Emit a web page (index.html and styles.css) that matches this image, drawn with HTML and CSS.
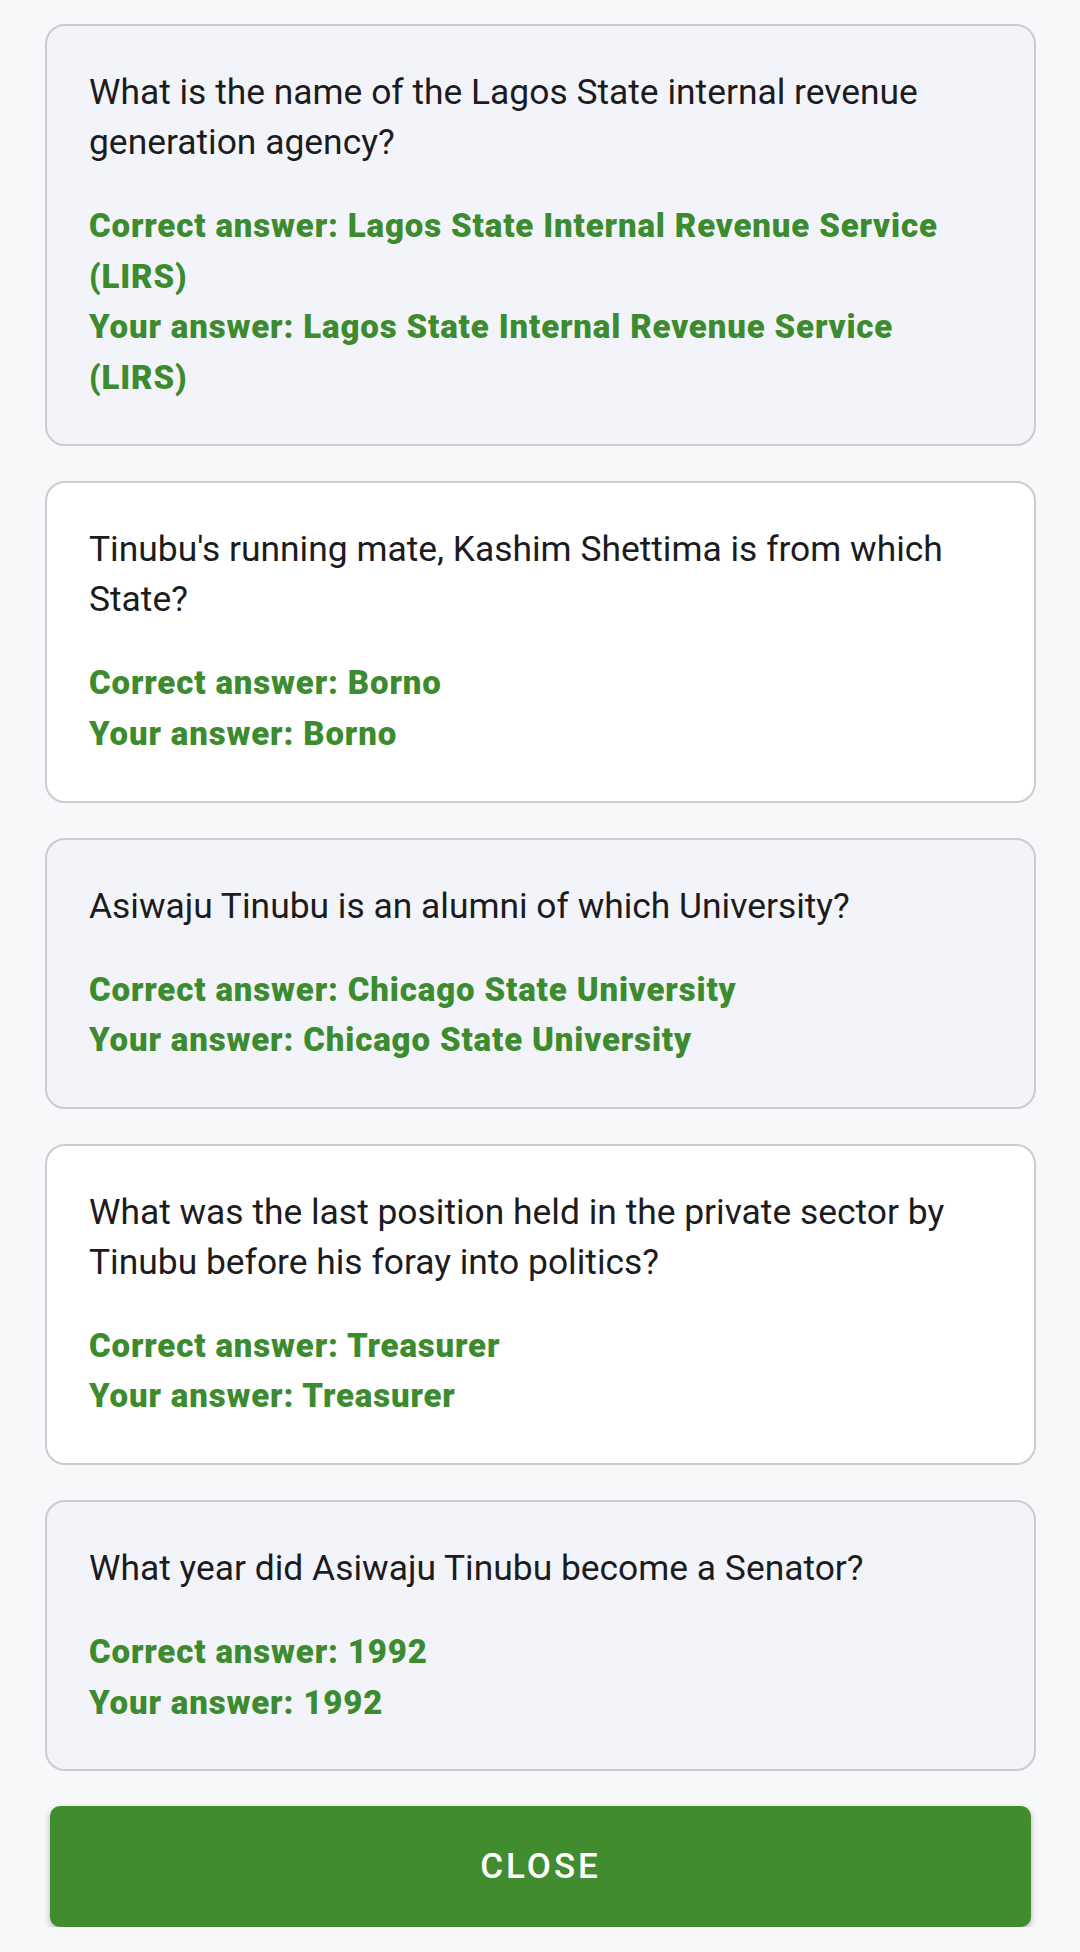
FILE: index.html
```html
<!DOCTYPE html>
<html lang="en">
<head>
<meta charset="utf-8">
<title>Quiz review</title>
<link rel="stylesheet" href="styles.css">
</head>
<body>
<main class="page">
  <section class="card card-tint">
    <p class="question">What is the name of the Lagos State internal revenue generation agency?</p>
    <div class="answers">
      <p class="answer">Correct answer: Lagos State Internal Revenue Service (LIRS)</p>
      <p class="answer">Your answer: Lagos State Internal Revenue Service (LIRS)</p>
    </div>
  </section>
  <section class="card">
    <p class="question">Tinubu's running mate, Kashim Shettima is from which State?</p>
    <div class="answers">
      <p class="answer">Correct answer: Borno</p>
      <p class="answer">Your answer: Borno</p>
    </div>
  </section>
  <section class="card card-tint">
    <p class="question">Asiwaju Tinubu is an alumni of which University?</p>
    <div class="answers">
      <p class="answer">Correct answer: Chicago State University</p>
      <p class="answer">Your answer: Chicago State University</p>
    </div>
  </section>
  <section class="card">
    <p class="question">What was the last position held in the private sector by Tinubu before his foray into politics?</p>
    <div class="answers">
      <p class="answer">Correct answer: Treasurer</p>
      <p class="answer">Your answer: Treasurer</p>
    </div>
  </section>
  <section class="card card-tint">
    <p class="question">What year did Asiwaju Tinubu become a Senator?</p>
    <div class="answers">
      <p class="answer">Correct answer: 1992</p>
      <p class="answer">Your answer: 1992</p>
    </div>
  </section>
  <div class="actions">
    <button class="close-btn" type="button">CLOSE</button>
  </div>
</main>
</body>
</html>
```

FILE: styles.css
```css
* {
  box-sizing: border-box;
}

html, body {
  margin: 0;
  padding: 0;
  background: #f7f8fa;
}

body {
  font-family: Roboto, "Noto Sans", "Liberation Sans", sans-serif;
  color: #1c1c1f;
}

.page {
  display: flex;
  flex-direction: column;
  gap: 35px;
  padding: 24px 44px 0 45px;
}

.card {
  background: #ffffff;
  border: 2px solid #cbccd0;
  border-radius: 20px;
  padding: 41px 41px 41px 42px;
}

.card-tint {
  background: #f3f4f9;
}

.question {
  margin: 0;
  font-size: 35.4px;
  line-height: 50px;
  font-weight: 400;
  color: #1c1c1f;
}

.answers {
  margin-top: 34px;
}

.answer {
  margin: 0;
  font-size: 33px;
  line-height: 50.6px;
  font-weight: 900;
  letter-spacing: 0.85px;
  color: #3d8b2f;
}

.actions {
  display: flex;
  padding: 0 5px;
}

.close-btn {
  flex: 1;
  height: 121px;
  border: none;
  border-radius: 10px;
  background: #408c2e;
  color: #ffffff;
  font-family: Roboto, "Noto Sans", "Liberation Sans", sans-serif;
  font-size: 35px;
  font-weight: 500;
  letter-spacing: 3px;
  box-shadow: 0 3px 6px rgba(0, 0, 0, 0.28);
  display: flex;
  align-items: center;
  justify-content: center;
  padding: 0;
}
```
